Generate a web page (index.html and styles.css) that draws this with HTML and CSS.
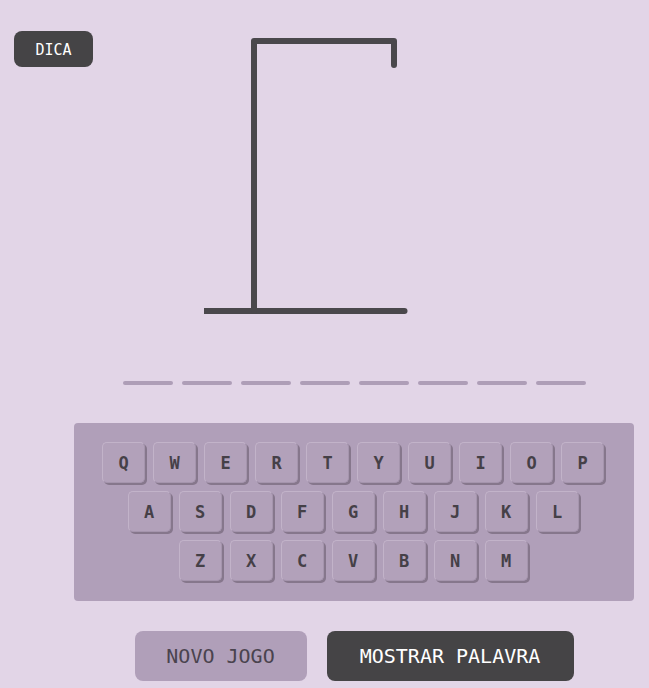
FILE: index.html
```html
<!DOCTYPE html>
<html lang="pt">
<head>
<meta charset="utf-8">
<title>Forca</title>
<link rel="stylesheet" href="styles.css">
</head>
<body>
<div class="app">
  <div class="side">
    <button class="hint">DICA</button>
  </div>
  <main class="game">
    <svg class="gallows" width="560" height="290" viewBox="0 0 560 290">
      <path d="M130 281 H330" class="ln ln-flat"/>
      <path d="M330 281 H330.5" class="ln"/>
      <path d="M180 281 V11 H320 V35" class="ln"/>
    </svg>
    <div class="word">
      <span class="dash"></span><span class="dash"></span><span class="dash"></span><span class="dash"></span>
      <span class="dash"></span><span class="dash"></span><span class="dash"></span><span class="dash"></span>
    </div>
    <div class="keyboard">
      <div class="row">
        <button class="key">Q</button><button class="key">W</button><button class="key">E</button><button class="key">R</button><button class="key">T</button><button class="key">Y</button><button class="key">U</button><button class="key">I</button><button class="key">O</button><button class="key">P</button>
      </div>
      <div class="row">
        <button class="key">A</button><button class="key">S</button><button class="key">D</button><button class="key">F</button><button class="key">G</button><button class="key">H</button><button class="key">J</button><button class="key">K</button><button class="key">L</button>
      </div>
      <div class="row">
        <button class="key">Z</button><button class="key">X</button><button class="key">C</button><button class="key">V</button><button class="key">B</button><button class="key">N</button><button class="key">M</button>
      </div>
    </div>
    <div class="actions">
      <button class="btn btn-new">NOVO JOGO</button>
      <button class="btn btn-show">MOSTRAR PALAVRA</button>
    </div>
  </main>
</div>
</body>
</html>
```
FILE: styles.css
```css
* { box-sizing: border-box; }
html, body {
  margin: 0;
  padding: 0;
  background: #e2d5e7;
  font-family: "DejaVu Sans Mono", "Liberation Mono", monospace;
}
.app {
  display: grid;
  grid-template-columns: 74px 560px;
  height: 688px;
  overflow: hidden;
}
.side {
  padding-top: 31px;
  padding-left: 14px;
}
.hint {
  width: 79px;
  height: 36px;
  border: none;
  border-radius: 8px;
  background: #454446;
  color: #ffffff;
  font-family: inherit;
  font-size: 15px;
  padding: 2px 0 0;
  cursor: pointer;
}
.game {
  display: flex;
  flex-direction: column;
  align-items: center;
  padding-top: 30px;
}
.gallows { display: block; }
.ln {
  fill: none;
  stroke: #4a484c;
  stroke-width: 6;
  stroke-linecap: round;
  stroke-linejoin: round;
}
.ln-flat { stroke-linecap: butt; }
.word {
  display: flex;
  gap: 9px;
  margin-top: 61px;
}
.dash {
  width: 50px;
  height: 4px;
  border-radius: 2px;
  background: #ae9eb7;
}
.keyboard {
  width: 560px;
  margin-top: 38px;
  background: #b09fb9;
  border-radius: 4px;
  padding: 19px 2px 20px 0;
  display: flex;
  flex-direction: column;
  align-items: center;
  gap: 8px;
}
.row {
  display: flex;
  gap: 8px;
}
.key {
  width: 43px;
  height: 41px;
  padding: 0;
  border: 1px solid #c2b3c9;
  border-right-color: #a595ad;
  border-bottom-color: #a595ad;
  border-radius: 5px;
  background: #b2a1ba;
  box-shadow: 2px 2px 0 #86778c;
  color: #454047;
  font-family: inherit;
  font-size: 17px;
  font-weight: bold;
  cursor: pointer;
}
.actions {
  display: flex;
  gap: 20px;
  margin-top: 30px;
}
.btn {
  height: 50px;
  border: none;
  border-radius: 8px;
  font-family: inherit;
  font-size: 20px;
  padding: 0;
  cursor: pointer;
}
.btn-new {
  width: 172px;
  background: #b09fb9;
  color: #4a434e;
}
.btn-show {
  width: 247px;
  background: #454446;
  color: #ffffff;
}
```
